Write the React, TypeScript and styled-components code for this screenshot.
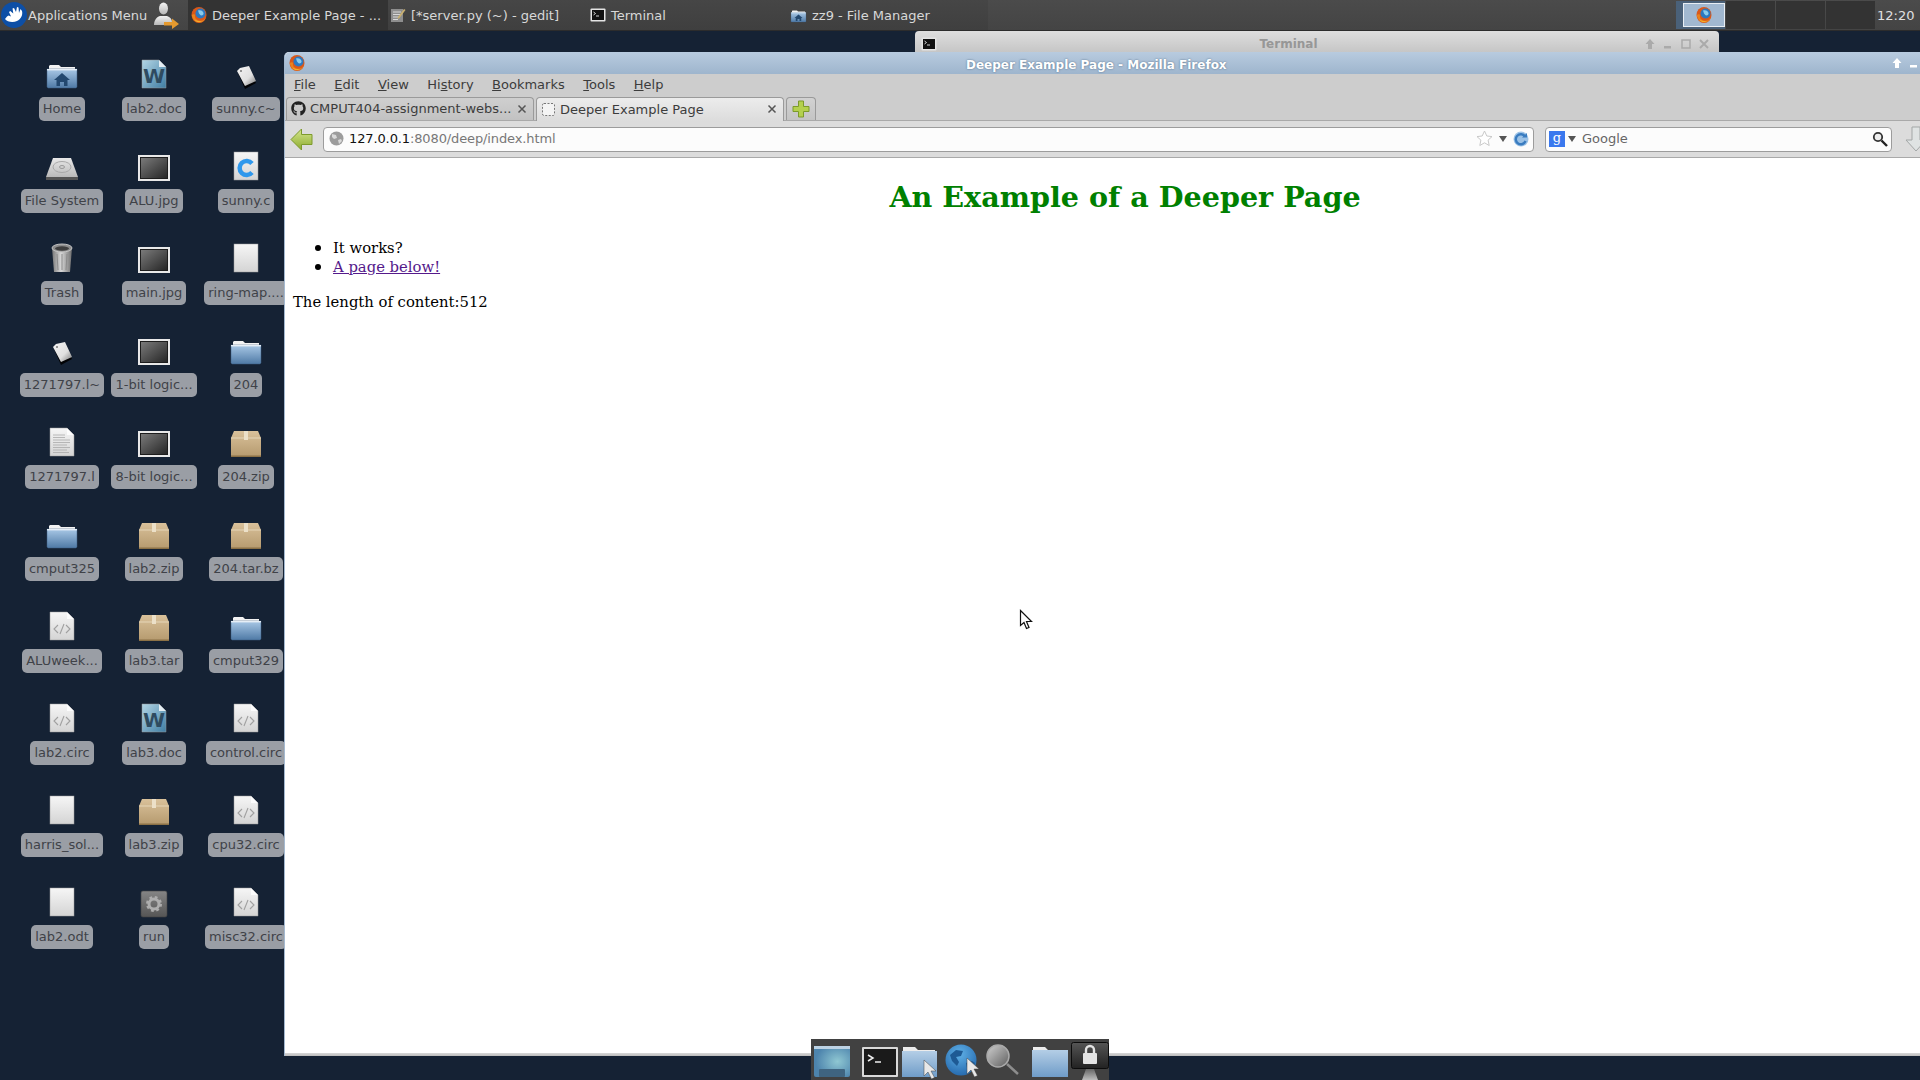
import React from 'react'
import styled, { createGlobalStyle } from 'styled-components'
import { FaGithub } from 'react-icons/fa'

const GlobalStyle = createGlobalStyle`
  html, body {
    margin: 0;
    height: 100%;
    overflow: hidden;
    background: #152234;
    font-family: "DejaVu Sans", sans-serif;
  }
`

const Screen = styled.div`
  position: relative;
  width: 1920px;
  height: 1080px;
  overflow: hidden;
  display: flex;
  flex-direction: column;
  background: #152234;
`

/* top panel */
const TopPanel = styled.div`
  height: 30px;
  flex: none;
  display: flex;
  align-items: stretch;
  background: linear-gradient(#4b4b4b, #444);
  border-bottom: 1px solid #2c2c2c;
  color: #d8d8d8;
  font-size: 13px;
`

const AppMenu = styled.div`
  display: flex;
  align-items: center;
  gap: 1px;
  width: 152px;
  padding-left: 1px;
  box-sizing: border-box;
  white-space: nowrap;
`

const UserSlot = styled.div`
  width: 36px;
  padding-left: 1px;
  box-sizing: border-box;
  display: flex;
  align-items: center;
`

const TaskList = styled.div`
  display: flex;
  width: 800px;
`

const Task = styled.div<{ $active?: boolean }>`
  width: 200px;
  display: flex;
  align-items: center;
  gap: 5px;
  padding-left: ${(p) => (p.$active ? '3px' : '2px')};
  box-sizing: border-box;
  white-space: nowrap;
  background: ${(p) => (p.$active ? '#333' : 'linear-gradient(#464646, #3f3f3f)')};
`

const Spacer = styled.div`
  flex: 1;
`

const Pager = styled.div`
  display: flex;
  gap: 1px;
  margin: 1px 2px 1px 0;
`

const Workspace = styled.div<{ $current?: boolean }>`
  width: 49px;
  background: ${(p) => (p.$current ? '#4a6179' : '#333')};
  display: flex;
  justify-content: flex-end;
`

const PagerWindow = styled.div`
  width: 42px;
  margin: 2px 0;
  background: #a1b8d0;
  border: 1px solid #e8eef4;
  box-sizing: border-box;
  display: flex;
  align-items: center;
  justify-content: center;
`

const Clock = styled.div`
  width: 43px;
  display: flex;
  align-items: center;
  color: #e0e0e0;
`

/* desktop */
const Desktop = styled.div`
  position: relative;
  flex: 1;
`

const IconGrid = styled.div`
  display: grid;
  grid-auto-flow: column;
  grid-template-columns: repeat(3, 92px);
  grid-template-rows: repeat(10, 92px);
  padding: 27px 0 0 16px;
`

const DesktopItem = styled.div`
  display: flex;
  flex-direction: column;
  align-items: center;
  gap: 7px;
`

const ItemLabel = styled.div`
  height: 24px;
  line-height: 24px;
  padding: 0 4px;
  border-radius: 5px;
  background: #9a9ea5;
  color: #3f4248;
  font-size: 13px;
  white-space: nowrap;
`

/* windows */
const TerminalWindow = styled.div`
  position: absolute;
  left: 915px;
  top: 0;
  width: 804px;
  height: 21px;
  box-sizing: border-box;
  border-radius: 4px 4px 0 0;
  background: linear-gradient(#dedede, #c6c6c6);
  display: flex;
  align-items: center;
  padding: 4px 9px 0 6px;
`

const TerminalTitle = styled.div`
  flex: 1;
  text-align: center;
  font-size: 12px;
  font-weight: bold;
  color: #979797;
  padding-right: 4px;
`

const TitleButtons = styled.div`
  display: flex;
  align-items: center;
  gap: 6px;
`

const BrowserWindow = styled.div`
  position: absolute;
  left: 284px;
  top: 21px;
  width: 1682px;
  height: 1004px;
  box-sizing: border-box;
  border: 1px solid #a4b9d0;
  border-top: none;
  border-bottom: none;
  border-radius: 5px 5px 0 0;
  background: #fff;
  display: flex;
  flex-direction: column;
`

const TitleBar = styled.div`
  height: 22px;
  flex: none;
  display: flex;
  align-items: center;
  padding: 0 4px;
  background: linear-gradient(#b8cbdf, #9eb5cd);
  border-radius: 5px 5px 0 0;
`

const TitleText = styled.div`
  margin: 3px 0 0 661px;
  font-size: 12px;
  font-weight: bold;
  color: #fff;
  white-space: nowrap;
  text-shadow: 0 0 2px #4f6a85;
`

const BrowserButtons = styled.div`
  display: flex;
  align-items: center;
  gap: 5px;
  margin-right: 41px;
`

const MenuBar = styled.div`
  height: 23px;
  flex: none;
  display: flex;
  align-items: center;
  padding: 0 0 2px 9px;
  box-sizing: border-box;
  gap: 18.5px;
  background: #cdcdcd;
  color: #3c3c3c;
  font-size: 13px;

  u {
    text-underline-offset: 1px;
  }
`

const TabStrip = styled.div`
  height: 24px;
  flex: none;
  display: flex;
  align-items: stretch;
  gap: 2px;
  padding-left: 1px;
  background: #cdcdcd;
  border-bottom: 1px solid #a9a9a9;
  box-sizing: border-box;
  font-size: 13px;
  color: #3c3c3c;
`

const Tab = styled.div<{ $active?: boolean }>`
  width: 248px;
  box-sizing: border-box;
  display: flex;
  align-items: center;
  gap: 4px;
  padding: 0 6px 1px 4px;
  border: 1px solid #9a9a9a;
  border-bottom: none;
  border-radius: 4px 4px 0 0;
  white-space: nowrap;
  background: ${(p) =>
    p.$active ? 'linear-gradient(#ececec, #dcdcdc)' : 'linear-gradient(#cfcfcf, #c2c2c2)'};
  margin-bottom: ${(p) => (p.$active ? '-1px' : '0')};
`

const TabLabel = styled.span`
  flex: 1;
`

const NewTabButton = styled.div`
  width: 30px;
  box-sizing: border-box;
  border: 1px solid #9a9a9a;
  border-bottom: none;
  border-radius: 4px 4px 0 0;
  background: linear-gradient(#d2d2d2, #c4c4c4);
  display: flex;
  align-items: center;
  justify-content: center;
`

const NavBar = styled.div`
  height: 37px;
  flex: none;
  display: flex;
  align-items: center;
  padding-left: 5px;
  background: #dcdcdc;
  border-bottom: 1px solid #a9a9a9;
  box-sizing: border-box;
`

const InputBox = styled.div<{ $width: number }>`
  width: ${(p) => p.$width}px;
  height: 25px;
  box-sizing: border-box;
  display: flex;
  align-items: center;
  border: 1px solid #9c9c9c;
  border-radius: 4px;
  background: #fcfcfc;
  font-size: 13px;
  color: #777;
`

const UrlBox = styled(InputBox)`
  margin-left: 10px;
  padding: 0 4px 1px 5px;
  letter-spacing: -0.12px;
`

const SearchBox = styled(InputBox)`
  margin-left: 11px;
  padding: 0 3px 1px;
  gap: 3px;
`

const UrlHost = styled.span`
  color: #111;
  margin-left: 5px;
`

const UrlFill = styled.div`
  flex: 1;
`

const UrlEnd = styled.div`
  display: flex;
  align-items: center;
  gap: 6px;
`

const SearchHint = styled.span`
  flex: 1;
  margin-left: 3px;
  color: #666;
`

const DownloadSlot = styled.div`
  margin-left: 12px;
  display: flex;
`

const Content = styled.div`
  flex: 1;
  padding: 0 8px;
  background: #fff;
  color: #000;
  font-family: "DejaVu Serif", serif;
  font-size: 14.8px;
  line-height: 19px;
`

const Heading = styled.h1`
  margin: 21px 0;
  font-size: 28.6px;
  line-height: 37px;
  font-weight: bold;
  text-align: center;
  color: green;
`

const BulletList = styled.ul`
  margin: 16px 0 17px;
  padding-left: 40px;

  li {
    height: 19px;
  }

  li::marker {
    font-size: 18px;
  }
`

const PageLink = styled.a`
  color: #551a8b;
  text-decoration: underline;
`

const Paragraph = styled.p`
  margin: 16px 0;
`

const WindowBase = styled.div`
  height: 3px;
  flex: none;
  background: linear-gradient(#d8d8d8, #bbb);
`

/* dock */
const Dock = styled.div`
  position: absolute;
  left: 811px;
  bottom: 0;
  width: 298px;
  height: 41px;
  box-sizing: border-box;
  padding-left: 3px;
  background: #414141;
  display: flex;
  align-items: flex-end;
`

const DockSlot = styled.div<{ $gap: number; $lift?: number }>`
  margin-left: ${(p) => p.$gap}px;
  margin-bottom: ${(p) => p.$lift ?? 0}px;
  display: flex;
`

const Pointer = styled.div`
  position: absolute;
  left: 1019px;
  top: 609px;
  display: flex;
`

const Defs = styled.svg`
  position: absolute;
  width: 0;
  height: 0;
`

const SvgDefs = () => (
  <Defs>
    <defs>
      <linearGradient id="gFolder" x1="0" y1="0" x2="0" y2="1">
        <stop offset="0" stopColor="#a9c8e6" />
        <stop offset="1" stopColor="#4f7aa6" />
      </linearGradient>
      <linearGradient id="gDockFolder" x1="0" y1="0" x2="0" y2="1">
        <stop offset="0" stopColor="#b4cee6" />
        <stop offset="1" stopColor="#6f9cc8" />
      </linearGradient>
      <linearGradient id="gDoc" x1="0" y1="0" x2="0" y2="1">
        <stop offset="0" stopColor="#f6f6f6" />
        <stop offset="1" stopColor="#d4d4d4" />
      </linearGradient>
      <linearGradient id="gWord" x1="0" y1="0" x2="1" y2="1">
        <stop offset="0" stopColor="#b3d6e6" />
        <stop offset="1" stopColor="#3f7da3" />
      </linearGradient>
      <linearGradient id="gImage" x1="0" y1="0" x2="1" y2="1">
        <stop offset="0" stopColor="#7a7a7a" />
        <stop offset="1" stopColor="#262626" />
      </linearGradient>
      <linearGradient id="gBox" x1="0" y1="0" x2="0" y2="1">
        <stop offset="0" stopColor="#d9c19a" />
        <stop offset="1" stopColor="#b59a6e" />
      </linearGradient>
      <linearGradient id="gTag" x1="0" y1="0" x2="1" y2="1">
        <stop offset="0" stopColor="#f4f4f4" />
        <stop offset="0.6" stopColor="#e0e0e0" />
        <stop offset="1" stopColor="#777" />
      </linearGradient>
      <linearGradient id="gTrash" x1="0" y1="0" x2="1" y2="0">
        <stop offset="0" stopColor="#777" />
        <stop offset="0.45" stopColor="#d8d8d8" />
        <stop offset="1" stopColor="#6f6f6f" />
      </linearGradient>
      <linearGradient id="gDrive" x1="0" y1="0" x2="0" y2="1">
        <stop offset="0" stopColor="#e8e8e8" />
        <stop offset="1" stopColor="#b9b9b9" />
      </linearGradient>
      <linearGradient id="gExec" x1="0" y1="0" x2="0" y2="1">
        <stop offset="0" stopColor="#858585" />
        <stop offset="1" stopColor="#555" />
      </linearGradient>
      <linearGradient id="gBack" x1="0" y1="0" x2="0" y2="1">
        <stop offset="0" stopColor="#d5e68e" />
        <stop offset="1" stopColor="#8cab2e" />
      </linearGradient>
      <linearGradient id="gUser" x1="0" y1="0" x2="0" y2="1">
        <stop offset="0" stopColor="#f2f2f2" />
        <stop offset="1" stopColor="#b8b8b8" />
      </linearGradient>
      <linearGradient id="gScreen" x1="0" y1="0" x2="0" y2="1">
        <stop offset="0" stopColor="#555" />
        <stop offset="1" stopColor="#222" />
      </linearGradient>
      <linearGradient id="gStand" x1="0" y1="0" x2="0" y2="1">
        <stop offset="0" stopColor="#666" />
        <stop offset="1" stopColor="#bdbdbd" />
      </linearGradient>
      <radialGradient id="gShow" cx="0.65" cy="0.5" r="0.6">
        <stop offset="0" stopColor="#8fc7d2" />
        <stop offset="1" stopColor="#4d84ad" />
      </radialGradient>
      <radialGradient id="gGlobe" cx="0.45" cy="0.3" r="0.8">
        <stop offset="0" stopColor="#5fb0e6" />
        <stop offset="1" stopColor="#1f62a8" />
      </radialGradient>
      <linearGradient id="gLens" x1="0" y1="0" x2="1" y2="1">
        <stop offset="0" stopColor="#d0d0d0" />
        <stop offset="1" stopColor="#5e5e5e" />
      </linearGradient>
    </defs>
  </Defs>
)

/* icon drawings */
const Glyph: React.FC<{ size?: number; height?: number; children: React.ReactNode }> = ({
  size = 32,
  height,
  children,
}) => (
  <svg width={size} height={height ?? size} viewBox={`0 0 ${size} ${height ?? size}`}>
    {children}
  </svg>
)

const DocSheet = ({ fold = true, fill = 'url(#gDoc)' }: { fold?: boolean; fill?: string }) =>
  fold ? (
    <>
      <path d="M4 2h17l7 7v21H4z" fill={fill} stroke="#9a9a9a" strokeWidth=".5" />
      <path d="M21 2l7 7h-7z" fill="#fff" opacity=".8" />
    </>
  ) : (
    <rect x="4" y="2" width="24" height="28" fill={fill} stroke="#9a9a9a" strokeWidth=".5" />
  )

const FolderShape = () => (
  <>
    <path d="M3 12V8l1-1h9l2 2h14v3z" fill="#f2f2f2" />
    <path d="M1 11h30v18l-1 1H2l-1-1z" fill="url(#gFolder)" stroke="#3e5f82" strokeWidth=".5" />
    <path d="M1 11h30v1.4H1z" fill="#e6eef6" />
  </>
)

const HomeIcon = () => (
  <Glyph>
    <FolderShape />
    <path d="M16 15l8 7h-2.5v6h-3.5v-4h-4v4H10.500v-6H8z" fill="#23486f" />
  </Glyph>
)

const FolderIcon = () => (
  <Glyph>
    <FolderShape />
  </Glyph>
)

const WordIcon = () => (
  <Glyph>
    <DocSheet fill="url(#gWord)" />
    <text x="16" y="25" textAnchor="middle" fontSize="20" fontWeight="bold" fontFamily="DejaVu Sans" fill="#2e4b60">
      W
    </text>
  </Glyph>
)

const BackupIcon = () => (
  <Glyph>
    <path d="M8 15l11-5 7 15-11 6z" fill="#000" opacity=".9" />
    <path d="M7 13l3-3 9-2 7 15-11 5z" fill="url(#gTag)" />
    <circle cx="11" cy="13" r="1" fill="#777" />
  </Glyph>
)

const DriveIcon = () => (
  <Glyph>
    <path d="M7 8h18l7 19H0z" fill="url(#gDrive)" />
    <ellipse cx="16" cy="17" rx="9" ry="5.500" fill="none" stroke="#a8a8a8" />
    <ellipse cx="16" cy="17" rx="2.500" ry="1.500" fill="none" stroke="#999" />
    <path d="M0 27h32v3H0z" fill="#555" />
  </Glyph>
)

const ImageIcon = () => (
  <Glyph>
    <rect x="0" y="5" width="32" height="26" fill="#e8e8e8" />
    <rect x="2" y="7" width="28" height="22" fill="#1d1d1d" />
    <rect x="3" y="8" width="26" height="20" fill="url(#gImage)" />
  </Glyph>
)

const SourceIcon = () => (
  <Glyph>
    <DocSheet fold={false} />
    <path d="M22 13.500a7 7 0 1 0 0 9" fill="none" stroke="#2f98ec" strokeWidth="4.500" />
  </Glyph>
)

const TrashIcon = () => (
  <Glyph>
    <path d="M6 6h20l-2 24H8z" fill="url(#gTrash)" />
    <ellipse cx="16" cy="6" rx="10" ry="4" fill="#8d8d8d" stroke="#c4c4c4" />
    <ellipse cx="16" cy="6.500" rx="7" ry="2.200" fill="#3f3f3f" />
    <path d="M11 12l1 16M16 12v16M21 12l-1 16" stroke="#8b8b8b" fill="none" />
  </Glyph>
)

const BlankIcon = () => (
  <Glyph>
    <DocSheet fold={false} />
  </Glyph>
)

const TextIcon = () => (
  <Glyph>
    <DocSheet />
    <path
      d="M7 9h12M7 11.500h12M7 14h17M7 16.500h17M7 19h14M7 21.500h17M7 24h14M7 26.500h16"
      stroke="#aaa"
      strokeWidth=".8"
    />
  </Glyph>
)

const MarkupIcon = () => (
  <Glyph>
    <DocSheet />
    <path d="M12 15l-4 4 4 4M20 15l4 4-4 4M18 14l-4 10" fill="none" stroke="#a0a0a0" strokeWidth="1.100" />
  </Glyph>
)

const ArchiveIcon = () => (
  <Glyph>
    <path d="M4 5h24l3 7v19H1V12z" fill="url(#gBox)" />
    <path d="M1 12h30" stroke="#e6d6b8" />
    <path d="M1 29.500h30V31H1z" fill="#8b7146" />
    <path d="M14 5h4v9h-4z" fill="#ece0c8" />
  </Glyph>
)

const ExecIcon = () => (
  <Glyph>
    <rect x="3" y="5" width="26" height="26" rx="2" fill="url(#gExec)" stroke="#444" strokeWidth=".6" />
    <circle cx="16" cy="18" r="6.500" fill="none" stroke="#aeaeae" strokeWidth="3" strokeDasharray="2.600 2.500" />
    <circle cx="16" cy="18" r="5" fill="none" stroke="#aeaeae" strokeWidth="3" />
  </Glyph>
)

const FirefoxIcon = () => (
  <svg width="16" height="16" viewBox="0 0 16 16">
    <ellipse cx="8" cy="8" rx="7.500" ry="8" fill="#d9581a" />
    <ellipse cx="9.500" cy="6.500" rx="5" ry="5" fill="#2c78c0" />
    <path d="M7 3.500c2.500-1 5 .3 5.500 2.500.3 1.500-1 2.800-3 2.300L8 6.500z" fill="#8acbec" />
    <path d="M.8 8c.5 4 3.500 7.500 7.500 7.500 3 0 5.500-2 6.500-5-1.300 2-3 3.300-5.500 3.300-3.300 0-5.800-2.300-5.300-5.500.1-.8-1.800-1.500-3.200-.3z" fill="#e9821d" />
    <path d="M3 12.500c2 2.300 5 3 7.800 1.800-3 .3-5.800-.5-7.800-1.800z" fill="#f6c130" />
  </svg>
)

const WhiskerLogo = () => (
  <svg width="26" height="26" viewBox="0 0 26 26">
    <circle cx="13" cy="13" r="13" fill="#0d4fa6" />
    <path
      d="M4 17c2 3 8 4 12 2 4-2 6-6 5-10l-1.500-2-1.500 4-.5-5.500-1.500-.5-1 5-2-4-1.500.5.800 5-3-2.500-1.300 1 2 4.500-2.500-1-1.500 1z"
      fill="#fff"
    />
  </svg>
)

const UserIcon = () => (
  <svg width="26" height="28" viewBox="0 0 26 28">
    <ellipse cx="10.500" cy="7.500" rx="4.500" ry="6" fill="url(#gUser)" />
    <path d="M1 24c0-4 2-8 6-9h7c3 1 5 3 5 6v3z" fill="url(#gUser)" />
    <path d="M11 21h8v-3.500l7 5.500-7 5v-3.500h-8z" fill="#e59a2f" />
  </svg>
)

const EditorIcon = () => (
  <svg width="16" height="16" viewBox="0 0 16 16">
    <rect x="1" y="2" width="12" height="13" fill="#8e8e8e" />
    <path d="M3 5h8M3 7.500h8M3 10h6M3 12.500h5" stroke="#d8d8d8" />
    <path d="M8 10l6-8 1.500 1-6 8-2 1z" fill="#c9b070" />
  </svg>
)

const ConsoleIcon = () => (
  <svg width="16" height="16" viewBox="0 0 16 16">
    <rect x=".5" y="1.500" width="15" height="13" rx="1" fill="#e4e4e4" />
    <rect x="2" y="3" width="12" height="10" fill="#111" />
    <path d="M3.500 5l2 1.500-2 1.500M6 9h3" stroke="#e8e8e8" fill="none" strokeWidth=".9" />
  </svg>
)

const HomeFolderSmall = () => (
  <svg width="17" height="16" viewBox="0 0 32 32">
    <FolderShape />
    <path d="M16 15l8 7h-2.500v6h-3.500v-4h-4v4H10.500v-6H8z" fill="#23486f" />
  </svg>
)

const WindowArrow = ({ color }: { color: string }) => (
  <svg width="12" height="12" viewBox="0 0 12 12">
    <path d="M6 1l4.500 5H8v5H4V6H1.500z" fill={color} />
  </svg>
)

const WindowMinimize = ({ color }: { color: string }) => (
  <svg width="12" height="12" viewBox="0 0 12 12">
    <path d="M2 8h7v2.500H2z" fill={color} />
  </svg>
)

const WindowMaximize = ({ color }: { color: string }) => (
  <svg width="12" height="12" viewBox="0 0 12 12">
    <rect x="2" y="2" width="8" height="8" fill="none" stroke={color} strokeWidth="1.500" />
  </svg>
)

const WindowClose = ({ color }: { color: string }) => (
  <svg width="12" height="12" viewBox="0 0 12 12">
    <path d="M2 2l8 8M10 2l-8 8" stroke={color} strokeWidth="2" />
  </svg>
)

const TabClose = () => (
  <svg width="10" height="10" viewBox="0 0 10 10">
    <path d="M1.500 1.500l7 7M8.500 1.500l-7 7" stroke="#555" strokeWidth="1.500" />
  </svg>
)

const BlankFavicon = () => (
  <svg width="15" height="15" viewBox="0 0 15 15">
    <rect x="1.500" y="1.500" width="12" height="12" rx="1.500" fill="#f4f4f4" stroke="#777" strokeDasharray="2 1.500" />
  </svg>
)

const PlusIcon = () => (
  <svg width="18" height="18" viewBox="0 0 18 18">
    <path d="M6.500 1h5v5.500H17v5h-5.500V17h-5v-5.500H1v-5h5.500z" fill="#b4d04e" stroke="#7c9a2a" />
  </svg>
)

const BackArrow = () => (
  <svg width="23" height="23" viewBox="0 0 23 23">
    <path d="M1 11.500L11.500 1v5.500H22v10H11.500V22z" fill="url(#gBack)" stroke="#7d9a2c" />
  </svg>
)

const SiteGlobe = () => (
  <svg width="15" height="15" viewBox="0 0 15 15">
    <circle cx="7.500" cy="7.500" r="7" fill="#9c9c9c" />
    <path d="M3 3l4 1 1 3-3 1-2-2zM9 9l3-1 1 2-3 3z" fill="#d9d9d9" />
  </svg>
)

const StarIcon = () => (
  <svg width="17" height="17" viewBox="0 0 17 17">
    <path d="M8.500 1l2.300 5 5.200.6-3.900 3.500 1.100 5.400-4.700-2.700-4.700 2.700 1.100-5.400L1 6.600 6.200 6z" fill="#fff" stroke="#c9c9c9" />
  </svg>
)

const DropTriangle = () => (
  <svg width="8" height="6" viewBox="0 0 8 6">
    <path d="M0 0h8L4 6z" fill="#555" />
  </svg>
)

const ReloadIcon = () => (
  <svg width="16" height="16" viewBox="0 0 16 16">
    <circle cx="8" cy="8" r="7.500" fill="#9cc2e6" />
    <path d="M12 5.500A5 5 0 1 0 12.500 10" fill="none" stroke="#3a7cc0" strokeWidth="2.400" />
    <path d="M9 6.500h5V2z" fill="#3a7cc0" />
  </svg>
)

const GoogleIcon = () => (
  <svg width="16" height="16" viewBox="0 0 16 16">
    <rect width="16" height="16" fill="#3a78ee" />
    <text x="8" y="11" textAnchor="middle" fontFamily="DejaVu Serif" fontSize="13" fill="#fff">
      g
    </text>
  </svg>
)

const SearchGlass = () => (
  <svg width="16" height="16" viewBox="0 0 16 16">
    <circle cx="6" cy="6" r="4.200" fill="#eee" stroke="#333" strokeWidth="1.800" />
    <path d="M9.500 9.500L15 15" stroke="#222" strokeWidth="2.400" />
  </svg>
)

const DownloadArrow = () => (
  <svg width="26" height="26" viewBox="0 0 26 26">
    <path d="M8 1h8v13h6L12 25 2 14h6z" fill="#dfe3e3" stroke="#a3a7a7" />
  </svg>
)

const MouseCursor = () => (
  <svg width="15" height="22" viewBox="0 0 15 22">
    <path d="M1.500 1.500v15l3.500-3 2.500 6 2.500-1-2.500-6h5z" fill="#fff" stroke="#111" strokeWidth="1.200" />
  </svg>
)

const ArrowBadge = () => (
  <path d="M22 14v16l4-4 3.500 7 3-1.500-3.500-6.500h5z" fill="#e8e8e8" stroke="#444" strokeWidth=".5" />
)

const DockShow = () => (
  <svg width="36" height="31" viewBox="0 0 36 31">
    <rect width="36" height="31" rx="2" fill="url(#gShow)" />
    <rect y="0" width="36" height="3" fill="#bcd2e4" />
    <rect x="5" y="23" width="26" height="8" rx="1" fill="#3f6480" />
  </svg>
)

const DockTerminal = () => (
  <svg width="36" height="30" viewBox="0 0 36 30">
    <rect width="36" height="30" rx="1" fill="#d9d9d9" />
    <rect x="2" y="2" width="32" height="26" fill="#1a1a1a" />
    <path d="M6 8l5 3-5 3M13 15h6" fill="none" stroke="#eee" strokeWidth="1.500" />
  </svg>
)

const DockFiles = () => (
  <svg width="36" height="34" viewBox="0 0 36 34">
    <path d="M1 1h12l3 3h17v5H1z" fill="#ececec" />
    <path d="M0 5h35v26H0z" fill="url(#gDockFolder)" />
    <ArrowBadge />
  </svg>
)

const DockGlobe = () => (
  <svg width="36" height="36" viewBox="0 0 36 36">
    <circle cx="16" cy="16" r="15.500" fill="url(#gGlobe)" />
    <path d="M5 11l6-5 7 1-2 5-5 1 3 5-2 4-5-5zM21 19l6-2 3 2-4 8-4-3z" fill="#1e5a94" />
    <ArrowBadge />
  </svg>
)

const DockLens = () => (
  <svg width="34" height="34" viewBox="0 0 34 34">
    <circle cx="12" cy="13" r="11" fill="url(#gLens)" stroke="#aaa" strokeWidth="1.500" />
    <path d="M21 21l11 10" stroke="#8d8d8d" strokeWidth="2.500" />
  </svg>
)

const DockFolder = () => (
  <svg width="36" height="31" viewBox="0 0 36 31">
    <path d="M1 1h12l3 3h18v5H1z" fill="#ececec" />
    <path d="M0 4h36v27H0z" fill="url(#gDockFolder)" />
  </svg>
)

const DockLock = () => (
  <svg width="38" height="38" viewBox="0 0 38 38">
    <rect x=".5" y=".5" width="37" height="26" rx="2" fill="url(#gScreen)" stroke="#0c0c0c" />
    <rect x="12" y="11" width="14" height="11" rx="1" fill="#e4e4e4" />
    <path d="M15 12V8a4 4 0 0 1 8 0v4" fill="none" stroke="#e4e4e4" strokeWidth="2.400" />
    <path d="M15 27h8l4 11H11z" fill="url(#gStand)" />
  </svg>
)

type Item = { label: string; icon: React.ReactNode }

const desktopItems: Item[] = [
  { label: 'Home', icon: <HomeIcon /> },
  { label: 'File System', icon: <DriveIcon /> },
  { label: 'Trash', icon: <TrashIcon /> },
  { label: '1271797.l~', icon: <BackupIcon /> },
  { label: '1271797.l', icon: <TextIcon /> },
  { label: 'cmput325', icon: <FolderIcon /> },
  { label: 'ALUweek...', icon: <MarkupIcon /> },
  { label: 'lab2.circ', icon: <MarkupIcon /> },
  { label: 'harris_sol...', icon: <BlankIcon /> },
  { label: 'lab2.odt', icon: <BlankIcon /> },
  { label: 'lab2.doc', icon: <WordIcon /> },
  { label: 'ALU.jpg', icon: <ImageIcon /> },
  { label: 'main.jpg', icon: <ImageIcon /> },
  { label: '1-bit logic...', icon: <ImageIcon /> },
  { label: '8-bit logic...', icon: <ImageIcon /> },
  { label: 'lab2.zip', icon: <ArchiveIcon /> },
  { label: 'lab3.tar', icon: <ArchiveIcon /> },
  { label: 'lab3.doc', icon: <WordIcon /> },
  { label: 'lab3.zip', icon: <ArchiveIcon /> },
  { label: 'run', icon: <ExecIcon /> },
  { label: 'sunny.c~', icon: <BackupIcon /> },
  { label: 'sunny.c', icon: <SourceIcon /> },
  { label: 'ring-map....', icon: <BlankIcon /> },
  { label: '204', icon: <FolderIcon /> },
  { label: '204.zip', icon: <ArchiveIcon /> },
  { label: '204.tar.bz', icon: <ArchiveIcon /> },
  { label: 'cmput329', icon: <FolderIcon /> },
  { label: 'control.circ', icon: <MarkupIcon /> },
  { label: 'cpu32.circ', icon: <MarkupIcon /> },
  { label: 'misc32.circ', icon: <MarkupIcon /> },
]

const App: React.FC = () => {
  return (
    <Screen>
      <GlobalStyle />
      <SvgDefs />
      <TopPanel>
        <AppMenu>
          <WhiskerLogo />
          Applications Menu
        </AppMenu>
        <UserSlot>
          <UserIcon />
        </UserSlot>
        <TaskList>
          <Task $active>
            <FirefoxIcon />
            Deeper Example Page - ...
          </Task>
          <Task>
            <EditorIcon />
            [*server.py (~) - gedit]
          </Task>
          <Task>
            <ConsoleIcon />
            Terminal
          </Task>
          <Task>
            <HomeFolderSmall />
            zz9 - File Manager
          </Task>
        </TaskList>
        <Spacer />
        <Pager>
          <Workspace $current>
            <PagerWindow>
              <FirefoxIcon />
            </PagerWindow>
          </Workspace>
          <Workspace />
          <Workspace />
          <Workspace />
        </Pager>
        <Clock>12:20</Clock>
      </TopPanel>

      <Desktop>
        <IconGrid>
          {desktopItems.map((item) => (
            <DesktopItem key={item.label}>
              {item.icon}
              <ItemLabel>{item.label}</ItemLabel>
            </DesktopItem>
          ))}
        </IconGrid>

        <TerminalWindow>
          <ConsoleIcon />
          <TerminalTitle>Terminal</TerminalTitle>
          <TitleButtons>
            <WindowArrow color="#aaa" />
            <WindowMinimize color="#aaa" />
            <WindowMaximize color="#aaa" />
            <WindowClose color="#aaa" />
          </TitleButtons>
        </TerminalWindow>

        <BrowserWindow>
          <TitleBar>
            <FirefoxIcon />
            <TitleText>Deeper Example Page - Mozilla Firefox</TitleText>
            <Spacer />
            <BrowserButtons>
              <WindowArrow color="#fff" />
              <WindowMinimize color="#fff" />
            </BrowserButtons>
          </TitleBar>
          <MenuBar>
            <span><u>F</u>ile</span>
            <span><u>E</u>dit</span>
            <span><u>V</u>iew</span>
            <span>Hi<u>s</u>tory</span>
            <span><u>B</u>ookmarks</span>
            <span><u>T</u>ools</span>
            <span><u>H</u>elp</span>
          </MenuBar>
          <TabStrip>
            <Tab>
              <FaGithub size={15} color="#222" />
              <TabLabel>CMPUT404-assignment-webs...</TabLabel>
              <TabClose />
            </Tab>
            <Tab $active>
              <BlankFavicon />
              <TabLabel>Deeper Example Page</TabLabel>
              <TabClose />
            </Tab>
            <NewTabButton>
              <PlusIcon />
            </NewTabButton>
          </TabStrip>
          <NavBar>
            <BackArrow />
            <UrlBox $width={1211}>
              <SiteGlobe />
              <UrlHost>127.0.0.1</UrlHost>:8080/deep/index.html
              <UrlFill />
              <UrlEnd>
                <StarIcon />
                <DropTriangle />
                <ReloadIcon />
              </UrlEnd>
            </UrlBox>
            <SearchBox $width={347}>
              <GoogleIcon />
              <DropTriangle />
              <SearchHint>Google</SearchHint>
              <SearchGlass />
            </SearchBox>
            <DownloadSlot>
              <DownloadArrow />
            </DownloadSlot>
          </NavBar>
          <Content>
            <Heading>An Example of a Deeper Page</Heading>
            <BulletList>
              <li>It works?</li>
              <li>
                <PageLink href="#below">A page below!</PageLink>
              </li>
            </BulletList>
            <Paragraph>The length of content:512</Paragraph>
          </Content>
          <WindowBase />
        </BrowserWindow>

        <Dock>
          <DockSlot $gap={0} $lift={3}><DockShow /></DockSlot>
          <DockSlot $gap={12} $lift={3}><DockTerminal /></DockSlot>
          <DockSlot $gap={4}><DockFiles /></DockSlot>
          <DockSlot $gap={7}><DockGlobe /></DockSlot>
          <DockSlot $gap={5} $lift={3}><DockLens /></DockSlot>
          <DockSlot $gap={12} $lift={3}><DockFolder /></DockSlot>
          <DockSlot $gap={3}><DockLock /></DockSlot>
        </Dock>
      </Desktop>

      <Pointer>
        <MouseCursor />
      </Pointer>
    </Screen>
  )
}

export default App
